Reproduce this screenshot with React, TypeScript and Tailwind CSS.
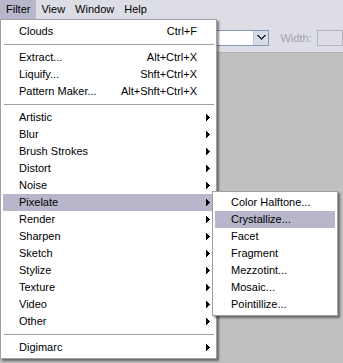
import React from "react";

const Arrow = () => (
  <svg width="4" height="7" viewBox="0 0 4 7" className="block" shapeRendering="crispEdges">
    <rect x="0" y="0" width="1" height="7" fill="#000" />
    <rect x="1" y="1" width="1" height="5" fill="#000" />
    <rect x="2" y="2" width="1" height="3" fill="#000" />
    <rect x="3" y="3" width="1" height="1" fill="#000" />
  </svg>
);

type Item =
  | { sep: true }
  | { label: string; shortcut?: string; sub?: boolean; active?: boolean; sep?: false };

const mainItems: Item[] = [
  { label: "Clouds", shortcut: "Ctrl+F" },
  { sep: true },
  { label: "Extract...", shortcut: "Alt+Ctrl+X" },
  { label: "Liquify...", shortcut: "Shft+Ctrl+X" },
  { label: "Pattern Maker...", shortcut: "Alt+Shft+Ctrl+X" },
  { sep: true },
  { label: "Artistic", sub: true },
  { label: "Blur", sub: true },
  { label: "Brush Strokes", sub: true },
  { label: "Distort", sub: true },
  { label: "Noise", sub: true },
  { label: "Pixelate", sub: true, active: true },
  { label: "Render", sub: true },
  { label: "Sharpen", sub: true },
  { label: "Sketch", sub: true },
  { label: "Stylize", sub: true },
  { label: "Texture", sub: true },
  { label: "Video", sub: true },
  { label: "Other", sub: true },
  { sep: true },
  { label: "Digimarc", sub: true },
];

const subItems = [
  { label: "Color Halftone...", active: false },
  { label: "Crystallize...", active: true },
  { label: "Facet", active: false },
  { label: "Fragment", active: false },
  { label: "Mezzotint...", active: false },
  { label: "Mosaic...", active: false },
  { label: "Pointillize...", active: false },
];

export default function App() {
  return (
    <div
      className="relative w-[343px] h-[363px] overflow-hidden bg-[#c0c0c0] flex flex-col text-[11px] text-black leading-none"
      style={{ fontFamily: '"Liberation Sans", Arial, sans-serif' }}
    >
      {/* Menu bar */}
      <div className="h-[19px] bg-[#dddde5] flex items-stretch">
        <div className="px-[6px] flex items-center bg-[#b8b6ca]">Filter</div>
        <div className="px-[5px] ml-[0px] flex items-center">View</div>
        <div className="px-[5px] flex items-center">Window</div>
        <div className="px-[5px] flex items-center">Help</div>
      </div>

      {/* Options bar */}
      <div className="h-[33px] bg-[#dddde5] flex items-start pt-[11px] pl-[150px]">
        <div className="w-[137px] h-[16px] border border-[#7f9db9] bg-white flex justify-end">
          <div className="w-[15px] h-[14px] bg-[#d6dbe6] border-l border-[#b8c6da] flex items-center justify-center">
            <svg width="9" height="6" viewBox="0 0 9 6" shapeRendering="crispEdges">
              <path d="M0 0h2v1h-2zM1 1h2v1h-2zM2 2h2v1h-2zM3 3h3v1h-3zM4 4h1v1h-1zM5 2h2v1h-2zM6 1h2v1h-2zM7 0h2v1h-2z" fill="#2b2f3a" />
            </svg>
          </div>
        </div>
        <div className="ml-[11px] h-[16px] flex items-center text-[#a4a4ac]">Width:</div>
        <div className="ml-[5px] w-[30px] h-[16px] border border-[#b4b4bc] bg-[#dddde5]" />
      </div>

      {/* Canvas */}
      <div className="flex-1 bg-[#c0c0c0] border-t border-[#b0b0b0]" />

      {/* Main dropdown menu */}
      <div className="absolute left-0 top-[19px] w-[217px] bg-white border border-[#a0a0a0] px-[2px] pt-[3px] pb-[2px] shadow-[2px_2px_2px_rgba(0,0,0,0.45)]">
        {mainItems.map((it, i) =>
          it.sep ? (
            <div key={i} className="h-[9px] flex items-center pl-[1px]">
              <div className="h-px w-full bg-[#a0a0a0]" />
            </div>
          ) : (
            <div
              key={i}
              className={
                "h-[17px] flex items-center pl-[16px] " + (it.active ? "bg-[#b8b6ca]" : "")
              }
            >
              <span className="flex-1">{it.label}</span>
              {it.shortcut && <span>{it.shortcut}</span>}
              <span className="w-[17px] flex items-center pl-[9px]">{it.sub && <Arrow />}</span>
            </div>
          )
        )}
      </div>

      {/* Submenu */}
      <div className="absolute left-[212px] top-[191px] w-[126px] bg-white border border-[#a0a0a0] px-[2px] pt-[2px] pb-[2px] shadow-[2px_2px_2px_rgba(0,0,0,0.45)]">
        {subItems.map((it, i) => (
          <div
            key={i}
            className={"h-[17px] flex items-center pl-[16px] " + (it.active ? "bg-[#b8b6ca]" : "")}
          >
            {it.label}
          </div>
        ))}
      </div>
    </div>
  );
}
